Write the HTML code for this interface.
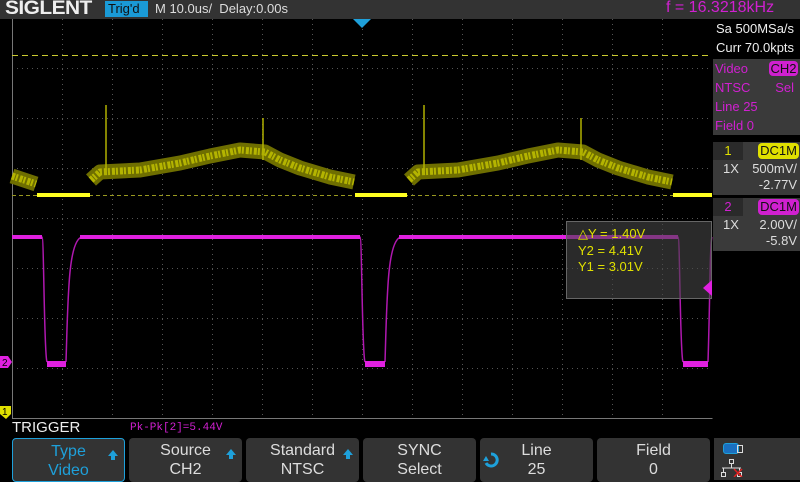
<!DOCTYPE html>
<html><head><meta charset="utf-8"><style>
body{margin:0;width:800px;height:480px;background:#000;overflow:hidden;font-family:"Liberation Sans",sans-serif;position:relative}
.a{position:absolute}
.btn{position:absolute;top:438px;height:44px;width:113px;background:#333;border-radius:4px;color:#ddd;font-size:16px;text-align:center;line-height:19px;padding-top:3px;box-sizing:border-box}
.btn .ar{position:absolute;right:6px;top:11px;width:0;height:0;border-left:5px solid transparent;border-right:5px solid transparent;border-bottom:6px solid #1ea0da}
.btn .ar:after{content:"";position:absolute;left:-2px;top:6px;width:4px;height:4px;background:#1ea0da}
</style></head><body>
<div class="a" style="left:0;top:0;width:800px;height:19px;background:#333"></div>
<div class="a" style="left:5px;top:-2px;font-size:19px;font-weight:bold;color:#eee;letter-spacing:-0.5px;transform:scaleX(1.1);transform-origin:left">SIGLENT</div>
<div class="a" style="left:105px;top:1px;width:43px;height:16px;background:#1a9ad6;color:#111;font-size:13px;line-height:16px;padding-left:3px;box-sizing:border-box">Trig'd</div>
<div class="a" style="left:155px;top:1px;font-size:13px;color:#ddd">M 10.0us/&nbsp; Delay:0.00s</div>
<div class="a" style="left:666px;top:-1px;font-size:16px;color:#d020d0">f = 16.3218kHz</div>

<svg class="a" style="left:0;top:0" width="800" height="480">
<g stroke="#555" stroke-width="1" stroke-dasharray="1,4">
<line x1="62.5" y1="19" x2="62.5" y2="418"/><line x1="112.5" y1="19" x2="112.5" y2="418"/><line x1="162.5" y1="19" x2="162.5" y2="418"/><line x1="212.5" y1="19" x2="212.5" y2="418"/><line x1="262.5" y1="19" x2="262.5" y2="418"/><line x1="312.5" y1="19" x2="312.5" y2="418"/><line x1="362.5" y1="19" x2="362.5" y2="418"/><line x1="412.5" y1="19" x2="412.5" y2="418"/><line x1="462.5" y1="19" x2="462.5" y2="418"/><line x1="512.5" y1="19" x2="512.5" y2="418"/><line x1="562.5" y1="19" x2="562.5" y2="418"/><line x1="612.5" y1="19" x2="612.5" y2="418"/><line x1="662.5" y1="19" x2="662.5" y2="418"/>
<line x1="12" y1="68.5" x2="712" y2="68.5"/><line x1="12" y1="118.5" x2="712" y2="118.5"/><line x1="12" y1="168.5" x2="712" y2="168.5"/><line x1="12" y1="218.5" x2="712" y2="218.5"/><line x1="12" y1="268.5" x2="712" y2="268.5"/><line x1="12" y1="318.5" x2="712" y2="318.5"/><line x1="12" y1="368.5" x2="712" y2="368.5"/>
</g>
<path d="M12.5 19V418.5H712.5" stroke="#777" fill="none"/>
<line x1="12" y1="55.5" x2="712" y2="55.5" stroke="#cccc30" stroke-dasharray="6,4"/>
<line x1="12" y1="195.5" x2="712" y2="195.5" stroke="#999920" stroke-dasharray="4,3"/>
<polygon points="353,19 371,19 362,28" fill="#1ea0da"/>
<g fill="none" stroke-linejoin="round" stroke-linecap="butt">
<g stroke="#6e6e00" stroke-width="15">
<polyline points="12,176 36,184"/>
<polyline points="91,180 100,172 140,170 180,163 210,156 240,150 265,152 280,160 300,168 330,177 354,182"/>
<polyline points="409,180 418,172 458,170 498,163 528,156 558,150 583,152 598,160 618,168 648,177 672,182"/>
</g>
<g stroke="#b4b400" stroke-width="7" stroke-dasharray="3,1,2,2">
<polyline points="12,176 36,184"/>
<polyline points="91,180 100,172 140,170 180,163 210,156 240,150 265,152 280,160 300,168 330,177 354,182"/>
<polyline points="409,180 418,172 458,170 498,163 528,156 558,150 583,152 598,160 618,168 648,177 672,182"/>
</g>
<polyline stroke="#ffff20" stroke-width="4" points="37,195 90,195"/>
<polyline stroke="#ffff20" stroke-width="4" points="355,195 407,195"/>
<polyline stroke="#ffff20" stroke-width="4" points="673,195 712,195"/>
<line x1="106" y1="105" x2="106" y2="175" stroke="#b0b000" stroke-width="1.5"/>
<line x1="263" y1="118" x2="263" y2="160" stroke="#b0b000" stroke-width="1.5"/>
<line x1="424" y1="105" x2="424" y2="175" stroke="#b0b000" stroke-width="1.5"/>
<line x1="581" y1="118" x2="581" y2="160" stroke="#b0b000" stroke-width="1.5"/>
</g>
<g fill="none" stroke="#b018b0" stroke-width="1.5">
<path d="M42 237C44 237 44 355 47 362M66 362C68 300 68 240 82 237M360 237C362 237 362 355 365 362M385 362C387 300 387 240 401 237M678 237C680 237 680 355 683 362M708 362C710 300 710 240 712 237"/>
</g>
<g stroke="#e020e0" stroke-width="4" fill="none">
<line x1="12" y1="237" x2="42" y2="237"/><line x1="80" y1="237" x2="360" y2="237"/><line x1="399" y1="237" x2="678" y2="237"/>
</g>
<g stroke="#e020e0" stroke-width="6" fill="none">
<line x1="47" y1="364" x2="66" y2="364"/><line x1="365" y1="364" x2="385" y2="364"/><line x1="683" y1="364" x2="708" y2="364"/>
</g>
<rect x="566.5" y="221.5" width="145" height="77" fill="rgba(70,70,70,0.6)" stroke="#666"/>
<polygon points="712,280 703,288 712,296" fill="#e020e0"/>
<polygon points="0,356 8,356 12,362 8,368 0,368" fill="#e020e0"/>
<text x="2" y="366" font-size="10" fill="#000" font-family="Liberation Sans">2</text>
<polygon points="0,406 11,406 11,414 6,419 0,414" fill="#e0e000"/>
<text x="2" y="415" font-size="10" fill="#000" font-family="Liberation Sans">1</text>
</svg>
<div class="a" style="left:578px;top:226px;font-size:13px;color:#e0e000;line-height:16.5px">△Y = 1.40V<br>Y2 = 4.41V<br>Y1 = 3.01V</div>

<div class="a" style="left:713px;top:19px;width:87px;height:39px;color:#eee;font-size:13px;line-height:19px;padding-left:3px">Sa 500MSa/s<br>Curr 70.0kpts</div>
<div class="a" style="left:713px;top:59px;width:87px;height:76px;background:#3a3a3a;color:#d020d0;font-size:13px;line-height:19px;padding-left:2px;box-sizing:border-box">Video<br>NTSC<span style="float:right;margin-right:6px">Sel</span><br>Line 25<br>Field 0</div>
<div class="a" style="left:769px;top:61px;width:29px;height:15px;background:#d020d0;border-radius:4px;color:#111;font-size:13px;line-height:15px;text-align:center">CH2</div>
<div class="a" style="left:713px;top:142px;width:87px;height:53px;background:#3a3a3a"></div>
<div class="a" style="left:713px;top:142px;width:30px;height:18px;background:#2a2a2a;color:#e0e000;font-size:13px;text-align:center;line-height:18px">1</div>
<div class="a" style="left:758px;top:143px;width:41px;height:16px;background:#e0e000;border-radius:4px;color:#111;font-size:13px;text-align:center;line-height:16px">DC1M</div>
<div class="a" style="left:713px;top:161px;width:84px;color:#ddd;font-size:13px;line-height:16px"><span style="padding-left:10px">1X</span><span style="float:right;text-align:right">500mV/<br>-2.77V</span></div>
<div class="a" style="left:713px;top:198px;width:87px;height:53px;background:#3a3a3a"></div>
<div class="a" style="left:713px;top:198px;width:30px;height:18px;background:#2a2a2a;color:#d020d0;font-size:13px;text-align:center;line-height:18px">2</div>
<div class="a" style="left:758px;top:199px;width:41px;height:16px;background:#d020d0;border-radius:4px;color:#111;font-size:13px;text-align:center;line-height:16px">DC1M</div>
<div class="a" style="left:713px;top:217px;width:84px;color:#ddd;font-size:13px;line-height:16px"><span style="padding-left:10px">1X</span><span style="float:right;text-align:right">2.00V/<br>-5.8V</span></div>

<div class="a" style="left:12px;top:419px;font-size:15px;color:#eee">TRIGGER</div>
<div class="a" style="left:130px;top:422px;font-size:11px;color:#d020d0;font-family:'Liberation Mono',monospace">Pk-Pk[2]=5.44V</div>
<div class="btn" style="left:12px;border:1px solid #1ea0da;color:#1ea0da">Type<br>Video<span class="ar"></span></div>
<div class="btn" style="left:129px">Source<br>CH2<span class="ar"></span></div>
<div class="btn" style="left:246px">Standard<br>NTSC<span class="ar"></span></div>
<div class="btn" style="left:363px">SYNC<br>Select</div>
<div class="btn" style="left:480px">Line<br>25
<svg class="a" style="left:2px;top:13px" width="18" height="18"><path d="M9 3A6 6 0 1 1 4 12" stroke="#1ea0da" stroke-width="3" fill="none"/><polygon points="1,10 7,10 4,5" fill="#1ea0da"/></svg></div>
<div class="btn" style="left:597px">Field<br>0</div>
<div class="a" style="left:714px;top:438px;width:86px;height:42px;background:#333"></div>
<div class="a" style="left:723px;top:443px;width:14px;height:9px;border:1px solid #1ea0da;background:#1a70c0;border-radius:3px"></div>
<div class="a" style="left:737px;top:445px;width:4px;height:6px;border:1px solid #ddd"></div>
<svg class="a" style="left:720px;top:459px" width="24" height="18"><g stroke="#ddd" fill="none"><rect x="9.5" y="0.5" width="4" height="4"/><path d="M11.5 5V9M2 9H21M3.5 9V13M19.5 9V13"/><rect x="1.5" y="13.5" width="4" height="4"/><rect x="17.5" y="13.5" width="4" height="4"/></g><path d="M14 10L22 18M22 10L14 18" stroke="#e02020" stroke-width="1.5"/></svg>
</body></html>
